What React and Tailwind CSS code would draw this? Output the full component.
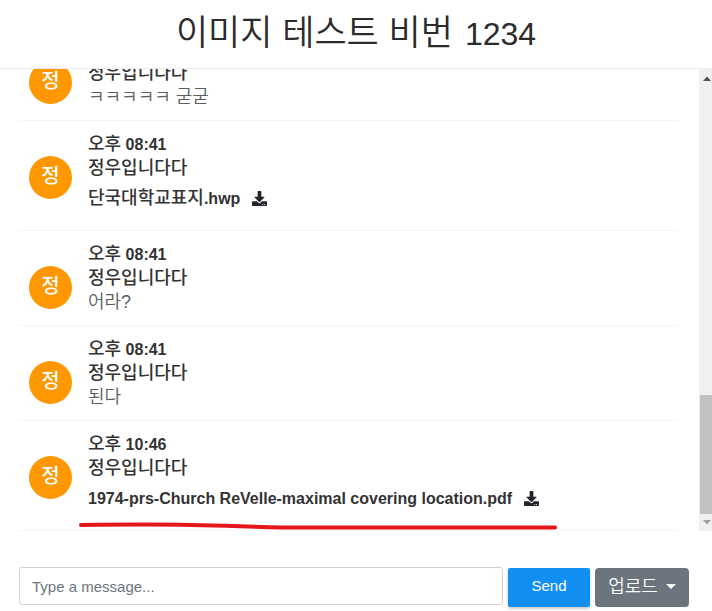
import { useState } from "react";
import { FaDownload } from "react-icons/fa";

const messages = [
  { id: 1, sender: "정우입니다다", text: "ㅋㅋㅋㅋㅋ 굳굳" },
  { id: 2, time: "08:41", sender: "정우입니다다", file: ["단국대학교표지", ".hwp"] },
  { id: 3, time: "08:41", sender: "정우입니다다", text: "어라?" },
  { id: 4, time: "08:41", sender: "정우입니다다", text: "된다" },
  {
    id: 5,
    time: "10:46",
    sender: "정우입니다다",
    file: ["", "1974-prs-Church ReVelle-maximal covering location.pdf"],
    marked: true,
  },
];

// Hand-drawn red underline laid over the highlighted message.
function Marker() {
  return (
    <svg
      className="absolute -bottom-3 -left-3 h-3 w-[484px]"
      viewBox="0 0 484 12"
      fill="none"
      aria-hidden="true"
    >
      <path
        d="M5 6C50 5.500 90 5.500 115 6C160 6.500 180 8.500 235 8.500H479"
        stroke="#e5161b"
        strokeWidth="4"
        strokeLinecap="round"
      />
    </svg>
  );
}

function Message({ message }) {
  return (
    <li className="flex shrink-0 gap-4 border-b border-[#f6f6f6] py-[11px] pl-[10px]">
      <i
        className={`flex h-[43px] w-[43px] shrink-0 items-center justify-center rounded-full bg-[#ff9800] pb-1 text-xl font-medium text-white not-italic ${
          message.time ? "mt-6" : "mt-0"
        }`}
      >
        {message.sender[0]}
      </i>
      <div className="relative min-w-0 flex-1 leading-6 text-[#333333]">
        {message.time && (
          <p className="h-6 font-bold">
            <span className="text-lg leading-6 font-medium">오후</span> {message.time}
          </p>
        )}
        <p className="h-6 text-lg leading-6 font-medium">{message.sender}</p>
        {message.file ? (
          <div className="mb-0.5 flex h-[37px] items-center font-bold">
            <span>
              <span className="text-lg leading-6 font-medium">{message.file[0]}</span>
              {message.file[1]}
            </span>
            <button type="button" aria-label="download" className="ml-3 text-[#212529]">
              <FaDownload className="h-[15px] w-[15px]" />
            </button>
          </div>
        ) : (
          <p className="h-6 text-lg leading-6 font-[350] text-[#5a5d61]">{message.text}</p>
        )}
        {message.marked && <Marker />}
      </div>
    </li>
  );
}

function Scrollbar() {
  return (
    <div className="flex w-[13px] shrink-0 flex-col bg-[#f0f0f0] pl-px">
      <svg className="h-4 w-full" viewBox="0 0 12 16" aria-hidden="true">
        <path d="M3 12L7 7.500L11 12Z" fill="#505050" />
      </svg>
      <div className="flex-[309]" />
      <div className="flex-[119] bg-[#c1c1c1]" />
      <svg className="h-[17px] w-full" viewBox="0 0 12 17" aria-hidden="true">
        <path d="M3 6L11 6L7 10.500Z" fill="#a0a0a0" />
      </svg>
    </div>
  );
}

export default function App() {
  const [draft, setDraft] = useState("");
  return (
    <main className="flex h-screen flex-col bg-white font-['Liberation_Sans','Noto_Sans_CJK_KR',sans-serif]">
      <header className="flex h-[69px] shrink-0 items-center justify-center border-b border-[#ececec] pb-0.5">
        <h1 className="flex items-baseline gap-3 text-[32px] leading-10 text-[#2b2b2b]">
          <span className="text-[35px] leading-10 font-[350]">이미지 테스트 비번</span>
          <span>1234</span>
        </h1>
      </header>
      <section className="flex min-h-0 flex-1">
        <ul className="mr-5 ml-[19px] flex min-w-0 flex-1 flex-col justify-end overflow-hidden">
          {messages.map((message) => (
            <Message key={message.id} message={message} />
          ))}
        </ul>
        <Scrollbar />
      </section>
      <form
        className="flex shrink-0 gap-[5px] pt-9 pr-[23px] pb-1 pl-[19px]"
        onSubmit={(event) => event.preventDefault()}
      >
        <input
          type="text"
          aria-label="Message"
          placeholder="Type a message..."
          value={draft}
          onChange={(event) => setDraft(event.target.value)}
          className="h-[38px] min-w-0 flex-1 rounded-[3px] border border-[#cfd2d5] px-3 text-[15px] text-[#495057] placeholder:text-[#6c757d]"
        />
        <button
          type="submit"
          className="mt-px h-[39px] w-[82px] rounded-xs bg-[#128ff2] pb-0.5 text-[15px] text-white shadow-[0_2px_3px_rgba(0,0,0,0.2)]"
        >
          Send
        </button>
        <button
          type="button"
          className="mt-px flex h-[39px] w-[94px] items-center justify-center gap-2 rounded-sm bg-[#6c757d] pb-0.5 text-lg font-[350] text-white"
        >
          업로드
          <svg className="h-[5px] w-[10px]" viewBox="0 0 10 5" aria-hidden="true">
            <path d="M0 0H10L5 5Z" fill="currentColor" />
          </svg>
        </button>
      </form>
    </main>
  );
}
